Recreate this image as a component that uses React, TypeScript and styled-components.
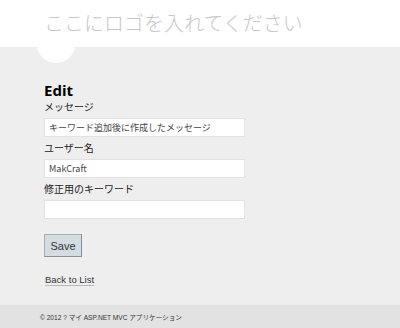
import React from 'react';
import styled, { createGlobalStyle } from 'styled-components';

const GlobalStyle = createGlobalStyle`
  html, body {
    margin: 0;
    padding: 0;
    background: #efeeef;
  }
  body {
    font-family: "Open Sans", "Noto Sans CJK JP", sans-serif;
    color: #333;
  }
`;

const Page = styled.div`
  width: 400px;
  height: 328px;
  display: flex;
  flex-direction: column;
  overflow: hidden;
`;

const Header = styled.header`
  position: relative;
  z-index: 1;
  height: 47px;
  background: #fff;
  display: flex;
  align-items: center;
  padding: 0 0 2px 44px;
  box-sizing: border-box;
`;

const SiteTitle = styled.div`
  font-family: "Noto Sans CJK JP", sans-serif;
  font-size: 20px;
  font-weight: 300;
  line-height: 24px;
  color: #c8c8c8;
`;

const Main = styled.main`
  position: relative;
  flex: 1;
  padding: 34px 0 0 44px;

  &::before {
    content: '';
    position: absolute;
    top: -22px;
    left: 37px;
    width: 38px;
    height: 38px;
    border-radius: 50%;
    background: #fff;
  }
`;

const Title = styled.h2`
  margin: 0;
  font-family: "Open Sans", "Noto Sans CJK JP", sans-serif;
  font-size: 15px;
  font-weight: 700;
  line-height: 19px;
  color: #000;
`;

const Form = styled.form`
  display: flex;
  flex-direction: column;
  align-items: flex-start;
`;

const Field = styled.div`
  display: flex;
  flex-direction: column;
  gap: 4px;
  margin-bottom: 4px;
`;

const Label = styled.label`
  font-family: "Noto Sans CJK JP", sans-serif;
  font-size: 10px;
  line-height: 14px;
  color: #222;
`;

const Input = styled.input`
  box-sizing: border-box;
  width: 201px;
  height: 19px;
  margin: 0;
  padding: 0 4px;
  border: 1px solid #e2e2e2;
  background: #fff;
  font-family: "Noto Sans CJK JP", sans-serif;
  font-size: 9px;
  color: #444;
  outline: none;
`;

const SaveButton = styled.button`
  margin-top: 11px;
  box-sizing: border-box;
  width: 38px;
  height: 23px;
  padding: 0;
  background: #d3dce0;
  border: 1px solid #a9aeb0;
  border-bottom-color: #8a8f92;
  border-right-color: #8a8f92;
  font-family: "Liberation Sans", sans-serif;
  font-size: 11px;
  color: #333;
`;

const BackRow = styled.div`
  margin-top: 13px;
  padding-left: 1px;
  line-height: 14px;
`;

const BackLink = styled.a`
  font-family: "Liberation Sans", sans-serif;
  font-size: 9.5px;
  color: #333;
  text-decoration: underline;
  text-decoration-color: #b8b8b8;
  text-underline-offset: 2px;
`;

const Footer = styled.footer`
  height: 23px;
  background: #e2e2e2;
  display: flex;
  align-items: center;
  padding-left: 40px;
`;

const FooterText = styled.span`
  font-family: "Liberation Sans", "Noto Sans CJK JP", sans-serif;
  font-size: 6.6px;
  color: #333;
`;

export default function App() {
  return (
    <Page>
      <GlobalStyle />
      <Header>
        <SiteTitle>ここにロゴを入れてください</SiteTitle>
      </Header>
      <Main>
        <Title>Edit</Title>
        <Form onSubmit={(e) => e.preventDefault()}>
          <Field>
            <Label>メッセージ</Label>
            <Input defaultValue="キーワード追加後に作成したメッセージ" />
          </Field>
          <Field>
            <Label>ユーザー名</Label>
            <Input defaultValue="MakCraft" />
          </Field>
          <Field>
            <Label>修正用のキーワード</Label>
            <Input defaultValue="" />
          </Field>
          <SaveButton type="submit">Save</SaveButton>
        </Form>
        <BackRow>
          <BackLink href="#">Back to List</BackLink>
        </BackRow>
      </Main>
      <Footer>
        <FooterText>© 2012 ? マイ ASP.NET MVC アプリケーション</FooterText>
      </Footer>
    </Page>
  );
}
